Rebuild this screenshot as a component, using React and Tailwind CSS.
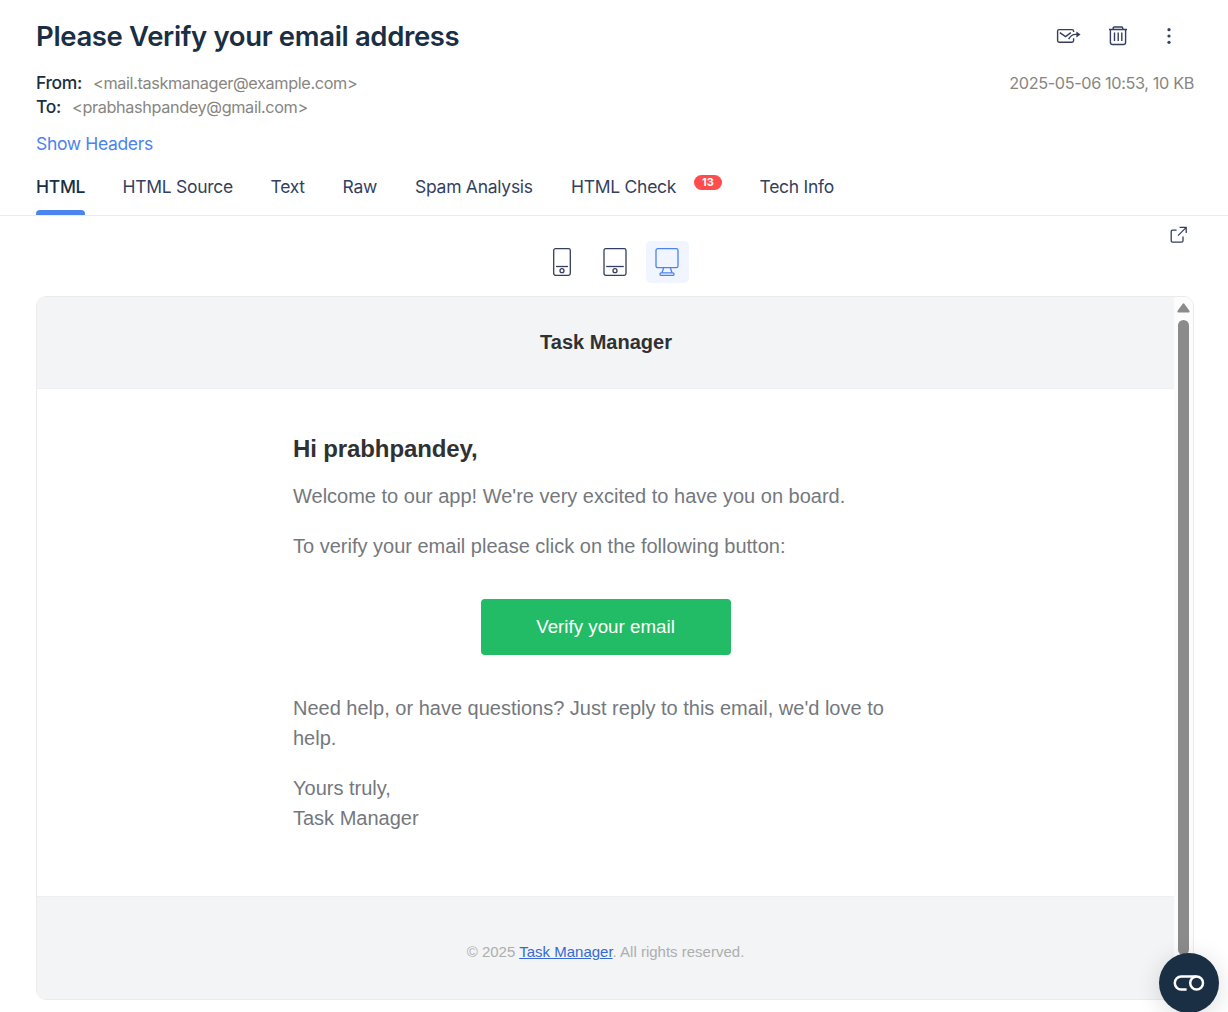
import React from "react";

const TABS = [
  { label: "HTML", active: true, width: "w-[49px]" },
  { label: "HTML Source", width: "w-[110.5px]" },
  { label: "Text", width: "w-[34.5px]" },
  { label: "Raw", width: "w-[35px]" },
  { label: "Spam Analysis", width: "w-[118.5px]" },
  { label: "HTML Check", badge: "13", width: "w-[151px]" },
  { label: "Tech Info", width: "w-[75px]" },
];

function ForwardIcon() {
  return (
    <svg width="26" height="18" viewBox="0 0 26 18" fill="none" stroke="currentColor" strokeWidth="1.4">
      <path d="M17.6 5V4.2Q17.6 2.6 16 2.6H3.2Q1.6 2.6 1.6 4.2V13.6Q1.6 15.2 3.2 15.2H16Q17.6 15.2 17.6 13.6V11.2" />
      <path d="M3.8 5.6L9.6 9.6L14.8 5.6" />
      <path d="M12.6 12.2Q15.4 7.4 19.4 7.4H22.5" />
      <path d="M20.4 4.4L24.6 7.4L20.4 10.4Z" fill="currentColor" stroke="none" />
    </svg>
  );
}

function TrashIcon() {
  return (
    <svg width="20" height="20" viewBox="0 0 20 20" fill="none" stroke="currentColor" strokeWidth="1.4">
      <path d="M1 3.5H19M5.2 3.4V2.2Q5.2 1 6.4 1H13.6Q14.8 1 14.8 2.2V3.4" />
      <path d="M2.4 4V16.3Q2.4 18.5 4.6 18.5H15.4Q17.6 18.5 17.6 16.3V4" />
      <path d="M6.5 6.5V15M10.2 6.5V15M13.8 6.5V15" />
    </svg>
  );
}

function DotsIcon() {
  return (
    <svg width="4" height="18" viewBox="0 0 4 18" fill="currentColor">
      <circle cx="2" cy="2.7" r="1.6" />
      <circle cx="2" cy="9" r="1.6" />
      <circle cx="2" cy="15.3" r="1.6" />
    </svg>
  );
}

function PhoneIcon() {
  return (
    <svg width="18" height="28" viewBox="0 0 18 28" fill="none" stroke="currentColor" strokeWidth="1.3">
      <rect x="0.7" y="0.7" width="16.6" height="26.6" rx="1.8" />
      <path d="M3 18.5H15" />
      <circle cx="9" cy="22.7" r="2" />
    </svg>
  );
}

function TabletIcon() {
  return (
    <svg width="24" height="28" viewBox="0 0 24 28" fill="none" stroke="currentColor" strokeWidth="1.3">
      <rect x="1" y="0.7" width="22" height="26.6" rx="1.8" />
      <path d="M3.2 18.5H20.8" />
      <circle cx="12" cy="22.7" r="2" />
    </svg>
  );
}

function DesktopIcon() {
  return (
    <svg width="24" height="28" viewBox="0 0 24 28" fill="none" stroke="currentColor" strokeWidth="1.3">
      <rect x="1" y="0.7" width="22" height="19" rx="1.8" />
      <path d="M8.6 20L7 24.8M15.4 20L17 24.8" />
      <rect x="5" y="24.8" width="14" height="2.6" rx="1.2" />
    </svg>
  );
}

function OpenIcon() {
  return (
    <svg width="18" height="18" viewBox="0 0 18 18" fill="none" stroke="currentColor" strokeWidth="1.3">
      <path d="M6.6 4.2H2.6Q1.2 4.2 1.2 5.6V14.8Q1.2 16.2 2.6 16.2H11.6Q13 16.2 13 14.8V10.4" />
      <path d="M8 9.6L16 1.6M9.6 1.3H16.2V7" />
    </svg>
  );
}

function IconRow() {
  return (
    <div className="flex items-center text-[#343f5f]">
      <ForwardIcon />
      <div className="ml-[26px]"><TrashIcon /></div>
      <div className="ml-[39px]"><DotsIcon /></div>
    </div>
  );
}

export default function App() {
  return (
    <div className="relative h-[1012px] w-[1228px] overflow-hidden bg-white font-['Inter',sans-serif] text-[#1a2e44]">
      <header className="h-[160px] pl-9 pr-[34px] pt-[16px]">
        <div className="flex h-10 items-center justify-between pr-[23px]">
          <h1 className="whitespace-nowrap text-[27.5px] font-semibold leading-10 tracking-[-0.35px]">Please Verify your email address</h1>
          <IconRow />
        </div>
        <div className="mt-[15px] flex justify-between text-[16.25px] leading-6 tracking-[-0.37px]">
          <div className="whitespace-nowrap">
            <div className="flex"><span className="w-[57px] text-[17.5px] font-medium">From:</span><span className="text-[#87867f]">&lt;mail.taskmanager@example.com&gt;</span></div>
            <div className="flex"><span className="w-[36px] text-[17.5px] font-medium">To:</span><span className="text-[#87867f]">&lt;prabhashpandey@gmail.com&gt;</span></div>
          </div>
          <div className="whitespace-nowrap text-[#87867f]">2025-05-06 10:53, 10 KB</div>
        </div>
        <a className="mt-[13px] block w-fit whitespace-nowrap text-[17.5px] leading-6 tracking-[-0.34px] text-[#4c83ee]">Show Headers</a>
      </header>

      <nav className="flex h-[56px] gap-[37.5px] border-b border-[#ebebeb] pl-9 text-[17.5px] leading-6 tracking-[-0.27px]">
        {TABS.map((t) => (
          <div key={t.label} className={`${t.width} flex shrink-0 flex-col justify-between whitespace-nowrap pt-[15px] ${t.active ? "font-medium text-[#1a2e44]" : "text-[#343f5f]"}`}>
            <div className="flex justify-between">
              <span>{t.label}</span>
              {t.badge && <span className="h-[15px] w-7 rounded-full bg-[#ff4c4c] text-center text-[11px] font-bold leading-[15px] tracking-normal text-white">{t.badge}</span>}
            </div>
            {t.active && <div className="h-[5px] rounded-t bg-[#4c83ee]" />}
          </div>
        ))}
      </nav>

      <div className="flex h-20 justify-between pl-[540px] pr-[40px]">
        <div className="flex items-start gap-[10px] pt-[25px] text-[#343f5f]">
          <div className="flex h-[42px] w-[43px] items-center justify-center"><PhoneIcon /></div>
          <div className="flex h-[42px] w-[43px] items-center justify-center"><TabletIcon /></div>
          <div className="flex h-[42px] w-[43px] items-center justify-center rounded-[5px] bg-[#f0f5ff] pr-px text-[#4c83ee]"><DesktopIcon /></div>
        </div>
        <div className="pt-[10px] text-[#343f5f]"><OpenIcon /></div>
      </div>

      <main className="ml-9 flex h-[704px] w-[1158px] overflow-hidden rounded-[10px] border border-[#ebebeb] font-['Liberation_Sans',Arial,sans-serif]">
        <div className="flex w-[1137px] flex-col bg-white text-[20px] leading-[30px] text-[#74787e]">
          <div className="flex h-[92px] items-center justify-center border-b border-[#edeff2] bg-[#f2f4f6] pb-[2px] pl-px text-[20px] font-bold text-[#2f3133]">Task Manager</div>
          <div className="ml-[256px] flex w-[625px] flex-1 flex-col items-start pt-[45px]">
            <h2 className="text-[24px] font-bold leading-[30px] tracking-[-0.12px] text-[#2f3133]">Hi prabhpandey,</h2>
            <p className="mt-[17px]">Welcome to our app! We're very excited to have you on board.</p>
            <p className="mt-5">To verify your email please click on the following button:</p>
            <button className="ml-[188px] mt-[38px] h-14 w-[250px] rounded-[4px] bg-[#22bc66] pr-px text-[18.75px] text-white">Verify your email</button>
            <p className="mt-[38px]">Need help, or have questions? Just reply to this email, we'd love to<br />help.</p>
            <p className="mt-5">Yours truly,<br />Task Manager</p>
          </div>
          <footer className="flex h-[103px] items-center justify-center border-t border-[#edeff2] bg-[#f2f4f6] pt-[8px] text-[15px] text-[#aeaeae]">
            <p>© 2025 <a className="text-[#3869d4] underline">Task Manager</a>. All rights reserved.</p>
          </footer>
        </div>
        <div className="flex w-[19px] flex-col items-center bg-[#fcfcfc] pt-[5px] text-[#8b8b8b]">
          <svg width="13" height="11" viewBox="0 0 13 11" fill="currentColor" stroke="currentColor" strokeWidth="2" strokeLinejoin="round"><path d="M6.5 2.4L11.6 9.4H1.4Z" /></svg>
          <div className="mt-[7px] h-[635px] w-[11px] rounded-full bg-[#8b8b8b]" />
        </div>
      </main>

      <button aria-label="Open assistant" className="absolute left-[1159px] top-[953px] flex size-[60px] items-center justify-center rounded-full bg-[#1a2e44] shadow-[0_4px_24px_rgba(0,0,0,0.14)]">
        <svg width="32" height="16" viewBox="0 0 32 16" fill="none" stroke="#fff" strokeWidth="2.5">
          <path d="M23.2 1.6H8.2A6.4 6.4 0 0 0 8.2 14.4H13.6" />
          <circle cx="23.6" cy="8" r="6.4" />
        </svg>
      </button>
    </div>
  );
}
